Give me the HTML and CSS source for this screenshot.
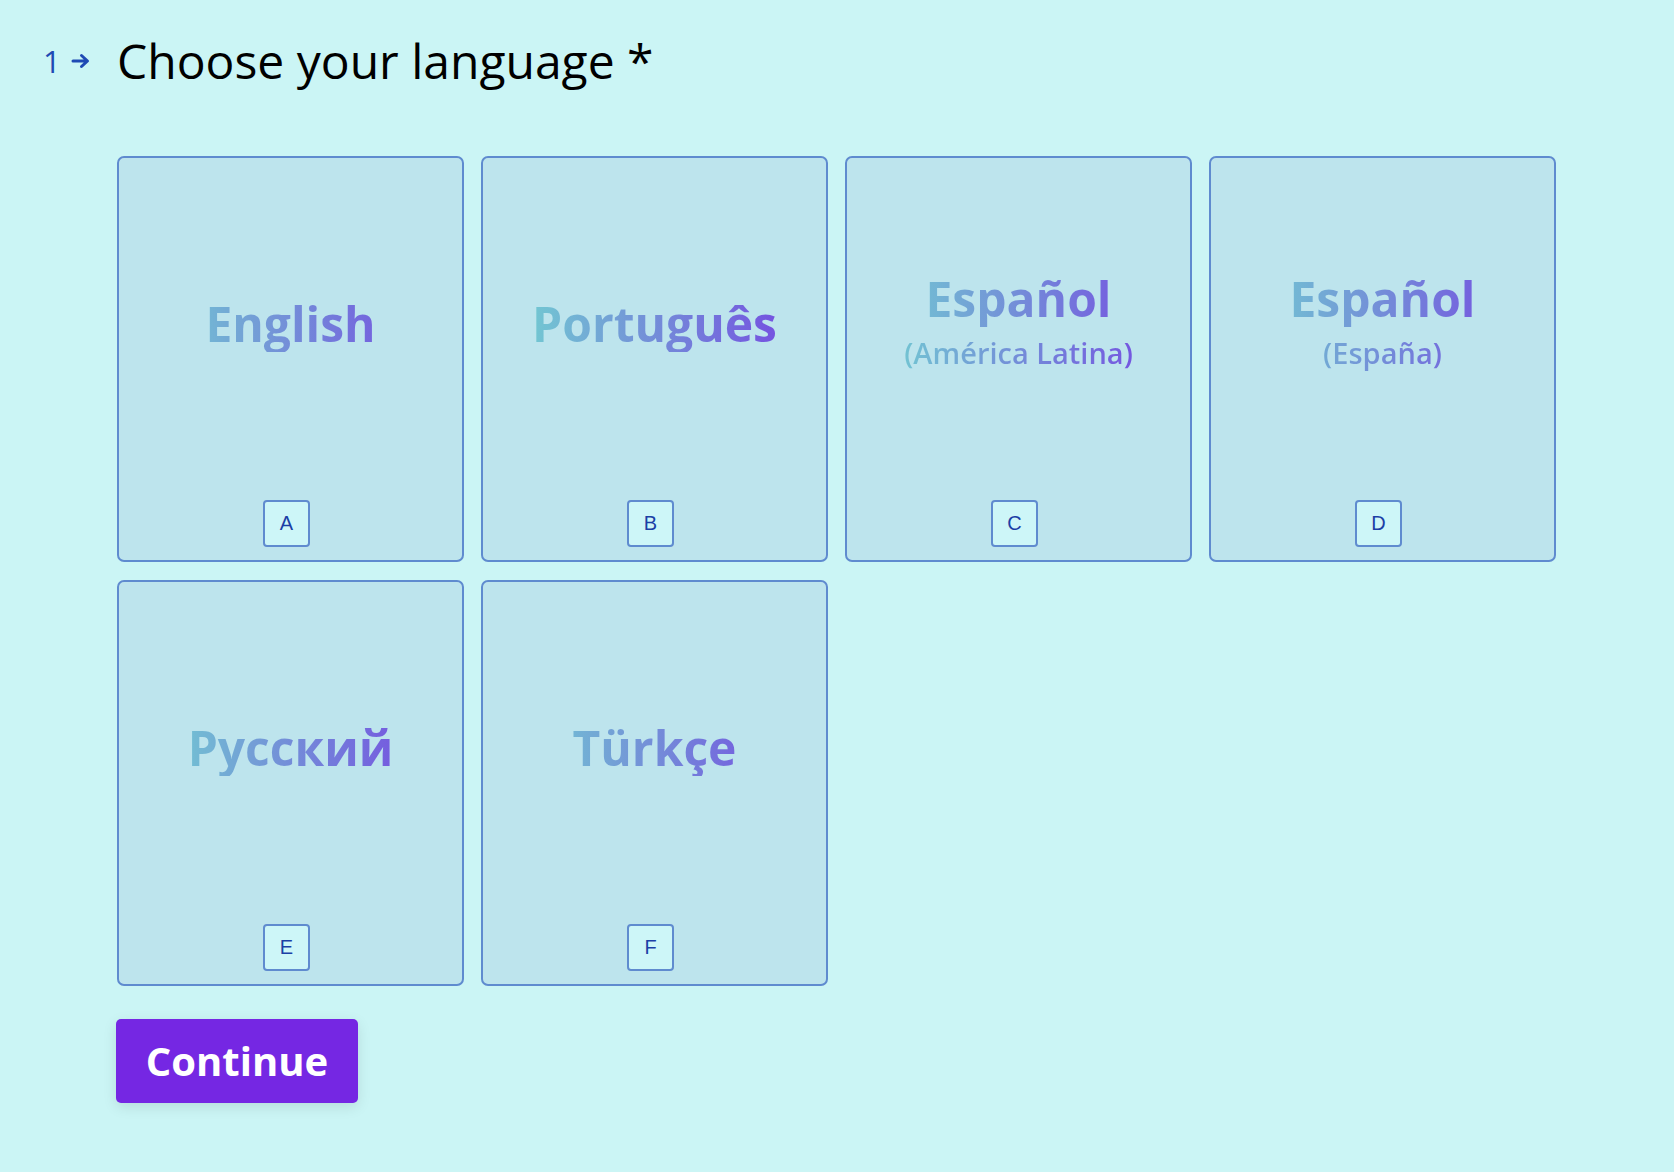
FILE: index.html
```html
<!DOCTYPE html>
<html lang="en">
<head>
  <meta charset="UTF-8" />
  <meta name="viewport" content="width=device-width, initial-scale=1.0" />
  <title>Choose your language</title>
  <link rel="stylesheet" href="styles.css">
</head>
<body>

  <div class="question">
    <div class="q-number">
      <span>1</span>
      <svg class="q-arrow" width="20" height="16" viewBox="0 0 20 16">
        <path d="M2 8 H16 M10.5 2.5 L16.5 8 L10.5 13.5" fill="none" stroke="currentColor" stroke-width="3" stroke-linecap="round" stroke-linejoin="round"/>
      </svg>
    </div>

    <div class="q-body">
      <h1 class="q-title">Choose your language *</h1>

      <div class="choices">
        <div class="choice">
          <div class="choice-pic"><div class="lang-name">English</div></div>
          <div class="choice-foot"><span class="key">A</span></div>
        </div>
        <div class="choice">
          <div class="choice-pic"><div class="lang-name">Português</div></div>
          <div class="choice-foot"><span class="key">B</span></div>
        </div>
        <div class="choice">
          <div class="choice-pic">
            <div class="lang-name">Español</div>
            <div class="lang-sub">(América Latina)</div>
          </div>
          <div class="choice-foot"><span class="key">C</span></div>
        </div>
        <div class="choice">
          <div class="choice-pic">
            <div class="lang-name">Español</div>
            <div class="lang-sub">(España)</div>
          </div>
          <div class="choice-foot"><span class="key">D</span></div>
        </div>
        <div class="choice">
          <div class="choice-pic"><div class="lang-name">Русский</div></div>
          <div class="choice-foot"><span class="key">E</span></div>
        </div>
        <div class="choice">
          <div class="choice-pic"><div class="lang-name">Türkçe</div></div>
          <div class="choice-foot"><span class="key">F</span></div>
        </div>
      </div>

      <button class="continue-btn">Continue</button>
    </div>
  </div>

</body>
</html>
```

FILE: styles.css
```css
:root {
  --page-bg: #cbf5f5;
  --card-bg: #bde4ed;
  --card-border: #5f8bcf;
  --key-bg: #cdf6f8;
  --key-text: #1b3fa6;
  --accent: #7527e3;
  --number-color: #1f4ab4;
  --label-gradient: linear-gradient(90deg, #6ccccf 8%, #6f40e0 92%);
}

* {
  margin: 0;
  padding: 0;
  box-sizing: border-box;
}

html, body {
  height: 100%;
  background-color: var(--page-bg);
}

body {
  font-family: "Open Sans", "Noto Sans", sans-serif;
  color: #000;
}

.question {
  display: flex;
  padding: 32px 0 0 43px;
}

.q-number {
  display: flex;
  align-items: center;
  width: 74px;
  height: 36px;
  margin-top: 11px;
  font-size: 31px;
  line-height: 36px;
  color: var(--number-color);
}

.q-arrow {
  margin-left: 10px;
  display: block;
}

.q-title {
  font-size: 48px;
  font-weight: 400;
  line-height: 1.2;
  margin-bottom: 66px;
}

.choices {
  display: grid;
  grid-template-columns: repeat(4, 347px);
  column-gap: 17px;
  row-gap: 18px;
}

.choice {
  height: 406px;
  display: flex;
  flex-direction: column;
  background: var(--card-bg);
  border: 2px solid var(--card-border);
  border-radius: 7px;
  padding: 8px 8px 13px;
}

.choice-pic {
  height: 316px;
  display: flex;
  flex-direction: column;
  justify-content: center;
  text-align: center;
  opacity: 0.92;
}

.lang-name,
.lang-sub {
  background: var(--label-gradient);
  -webkit-background-clip: text;
  background-clip: text;
  color: transparent;
}

.lang-name {
  font-size: 48px;
  font-weight: 700;
  line-height: 56px;
}

.lang-sub {
  margin-top: 6px;
  margin-bottom: 3px;
  font-size: 29px;
  font-weight: 600;
  line-height: 40px;
}

.choice-foot {
  margin-top: 18px;
  display: flex;
  justify-content: center;
}

.key {
  width: 47px;
  height: 47px;
  margin-right: 8px;
  display: flex;
  align-items: center;
  justify-content: center;
  background: var(--key-bg);
  border: 2px solid var(--card-border);
  border-radius: 4px;
  font-family: "Liberation Sans", Arial, sans-serif;
  font-size: 20px;
  color: var(--key-text);
}

.continue-btn {
  margin-top: 33px;
  margin-left: -1px;
  width: 242px;
  height: 84px;
  background: var(--accent);
  color: #fff;
  border: none;
  border-radius: 5px;
  font-family: "Open Sans", sans-serif;
  font-size: 40px;
  font-weight: 700;
  box-shadow: 0 4px 14px rgba(0, 0, 0, 0.1);
  cursor: pointer;
}
```
